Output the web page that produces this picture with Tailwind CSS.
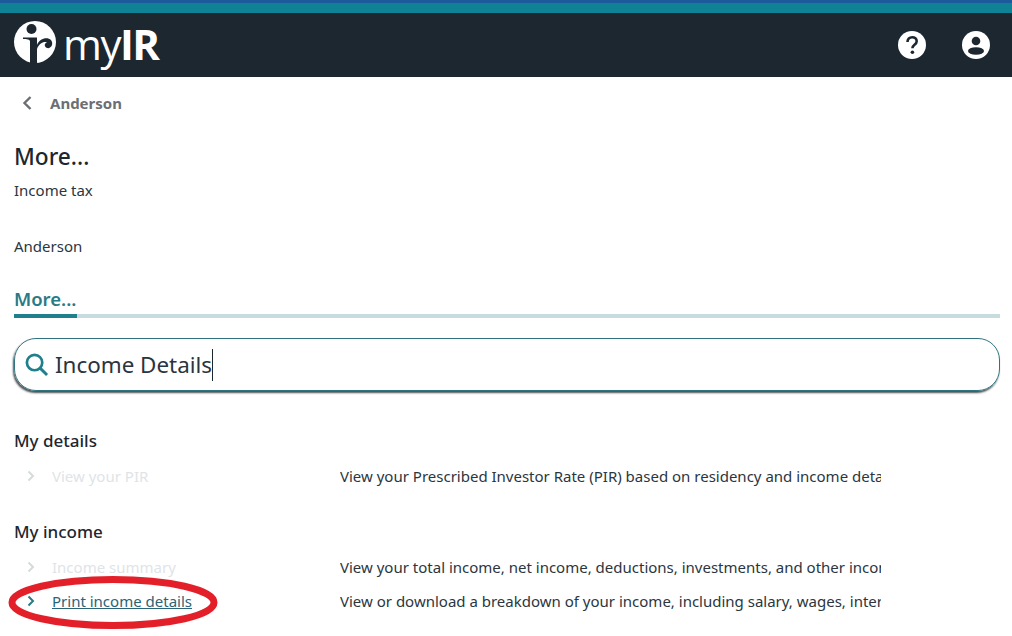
<!DOCTYPE html>
<html lang="en">
  <head>
    <meta charset="UTF-8" />
    <title>myIR</title>
    <script src="https://cdn.jsdelivr.net/npm/@tailwindcss/browser@4"></script>
  </head>
  <body class="relative h-[636px] w-[1012px] overflow-hidden bg-white font-['Noto_Sans','Open_Sans',sans-serif] text-[#1c2730]">
    <!-- Top stripes -->
    <div class="h-[3px] bg-[#1c5a9c]"></div>
    <div class="h-[10px] bg-[#0f8296]"></div>

    <!-- Header -->
    <header class="flex h-[64px] items-center justify-between bg-[#1c2730] pl-[14px] pr-[22px] text-white">
      <div class="flex items-center pb-[6px]">
        <svg viewBox="0 0 42 42" class="h-[42px] w-[42px]">
          <circle cx="21" cy="21" r="21" fill="#fff" />
          <circle cx="17.500" cy="8" r="5" fill="#1c2730" />
          <path d="M9 16.500h14V42h-7V20.500c0-2-3-2.500-7-2.500z" fill="#1c2730" />
          <path d="M23 24c2-6 10-9 14-5 3 4 0 9-4 8-3-1-3-5 0-5.500-3-1.500-8 1-10 6.500z" fill="#1c2730" />
        </svg>
        <span class="ml-[7px] flex pt-[4px] text-[42px] leading-none tracking-[-1.500px] font-['Open_Sans',sans-serif] font-normal">my<span class="font-bold">IR</span></span>
      </div>
      <div class="flex items-center gap-[36px]">
        <svg viewBox="0 0 28 28" class="h-[28px] w-[28px]">
          <circle cx="14" cy="14" r="14" fill="#fff" />
          <path d="M9.500 11c0-3 2-4.800 4.700-4.800 2.600 0 4.500 1.600 4.500 4 0 3.600-4.300 3.600-4.300 7" fill="none" stroke="#1c2730" stroke-width="2.600" />
          <circle cx="14.400" cy="21.300" r="1.800" fill="#1c2730" />
        </svg>
        <svg viewBox="0 0 28 28" class="h-[28px] w-[28px]">
          <circle cx="14" cy="14" r="14" fill="#fff" />
          <circle cx="14" cy="10" r="4.300" fill="#1c2730" />
          <ellipse cx="14" cy="20" rx="8" ry="3.800" fill="#1c2730" />
        </svg>
      </div>
    </header>

    <main class="pl-[14px] pr-[12px]">
      <!-- Back link -->
      <div class="flex h-[52px] items-center pl-[7px] text-[#6b6f73]">
        <svg viewBox="0 0 12 16" class="h-[16px] w-[12px]">
          <path d="M9.500 2 3.500 8l6 6" fill="none" stroke="#6b6f73" stroke-width="2.400" />
        </svg>
        <span class="ml-[17px] text-[15px] font-bold">Anderson</span>
      </div>

      <h1 class="mt-[11px] text-[22.700px] leading-[34px] font-medium">More...</h1>
      <p class="mt-[6px] text-[15px] leading-[20px] text-[#2b3640]">Income tax</p>
      <p class="mt-[36px] text-[15px] leading-[20px] text-[#2b3640]">Anderson</p>

      <!-- Tab -->
      <div class="mt-[30px] text-[18.500px] leading-[26px] font-semibold text-[#2b7a85]">More...</div>
      <div class="mt-[2px] h-[4px] bg-[#c6dcdf]">
        <div class="h-[4px] w-[63px] bg-[#1f7f8c]"></div>
      </div>

      <!-- Search -->
      <div class="mt-[20px] flex h-[53px] items-center rounded-[22px] border border-[#2f7480] pl-[9px] shadow-[-1px_2px_2px_#4a5054]">
        <svg viewBox="0 0 26 26" class="h-[25px] w-[25px]">
          <circle cx="11" cy="11" r="8" fill="none" stroke="#1f7f8c" stroke-width="2.800" />
          <path d="m16.500 16.500 7.500 7.500" stroke="#1f7f8c" stroke-width="3" />
        </svg>
        <span class="ml-[6px] border-r border-[#1c2730] text-[22.400px] leading-[32px] text-[#2a3440]">Income Details</span>
      </div>

      <!-- My details -->
      <h2 class="mt-[38px] text-[17px] leading-[24px] font-medium">My details</h2>
      <div class="mt-[11px] flex h-[24px] items-center text-[15px]">
        <svg viewBox="0 0 10 12" class="ml-[12px] h-[12px] w-[10px]">
          <path d="m2.500 1.500 4.500 4.500-4.500 4.500" fill="none" stroke="#d5dadb" stroke-width="2" />
        </svg>
        <span class="ml-[16px] w-[288px] text-[#e0e4e8]">View your PIR</span>
        <span class="w-[541px] overflow-hidden whitespace-nowrap text-[#2b3640]">View your Prescribed Investor Rate (PIR) based on residency and income details</span>
      </div>

      <!-- My income -->
      <h2 class="mt-[32px] text-[17px] leading-[24px] font-medium">My income</h2>
      <div class="mt-[11px] flex h-[24px] items-center text-[15px]">
        <svg viewBox="0 0 10 12" class="ml-[12px] h-[12px] w-[10px]">
          <path d="m2.500 1.500 4.500 4.500-4.500 4.500" fill="none" stroke="#d5dadb" stroke-width="2" />
        </svg>
        <span class="ml-[16px] w-[288px] text-[#e0e4e8]">Income summary</span>
        <span class="w-[541px] overflow-hidden whitespace-nowrap text-[#2b3640]">View your total income, net income, deductions, investments, and other income</span>
      </div>
      <div class="mt-[10px] flex h-[24px] items-center text-[15px]">
        <svg viewBox="0 0 10 12" class="ml-[12px] h-[12px] w-[10px]">
          <path d="m2.500 1.500 4.500 4.500-4.500 4.500" fill="none" stroke="#2b7a85" stroke-width="2" />
        </svg>
        <a class="ml-[16px] w-[288px] text-[#2a6478] underline">Print income details</a>
        <span class="w-[541px] overflow-hidden whitespace-nowrap text-[#2b3640]">View or download a breakdown of your income, including salary, wages, interest</span>
      </div>
    </main>

    <!-- Red hand-drawn ellipse -->
    <svg viewBox="0 0 1012 636" class="pointer-events-none absolute inset-0 h-[636px] w-[1012px]">
      <ellipse cx="113" cy="602.500" rx="101" ry="23" fill="none" stroke="#e3202a" stroke-width="7" />
    </svg>
  </body>
</html>
